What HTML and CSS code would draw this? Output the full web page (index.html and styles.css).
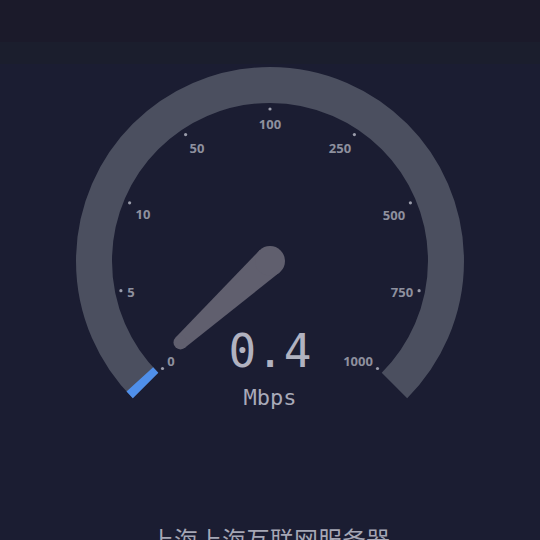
FILE: index.html
```html
<!DOCTYPE html>
<html lang="zh">
<head>
  <meta charset="UTF-8">
  <title>测速</title>
  <link rel="stylesheet" href="styles.css">
</head>
<body>
  <div class="topbar"></div>
  <div class="subbar"></div>

  <main class="main">
    <svg class="gauge" width="540" height="400" viewBox="0 64 540 400">
      <!-- track -->
      <path class="track" d="M145.55 385.45 A176 176 0 1 1 394.45 385.45"/>
      <!-- progress -->
      <path class="progress" d="M145.55 385.45 A176 176 0 0 1 139.83 379.45"/>

      <!-- ticks -->
      <g class="ticks">
        <circle cx="162.5" cy="368.5" r="1.6"/>
        <circle cx="120.9" cy="290.7" r="1.6"/>
        <circle cx="129.6" cy="202.8" r="1.6"/>
        <circle cx="185.6" cy="134.6" r="1.6"/>
        <circle cx="270" cy="109" r="1.6"/>
        <circle cx="354.4" cy="134.6" r="1.6"/>
        <circle cx="410.4" cy="202.8" r="1.6"/>
        <circle cx="419.1" cy="290.7" r="1.6"/>
        <circle cx="377.5" cy="368.5" r="1.6"/>
      </g>

      <g class="labels">
        <text x="171" y="361">0</text>
        <text x="131" y="292">5</text>
        <text x="143" y="214">10</text>
        <text x="197" y="148">50</text>
        <text x="270" y="124">100</text>
        <text x="340" y="148">250</text>
        <text x="394" y="215">500</text>
        <text x="402" y="292">750</text>
        <text x="358" y="361">1000</text>
      </g>

      <!-- needle -->
      <g class="needle">
        <polygon points="280.1,272.1 185.2,347.6 175.8,337.2 259.9,249.9"/>
        <circle cx="270" cy="261" r="15"/>
        <circle cx="180.5" cy="342.4" r="7"/>
      </g>

      <text class="speed" x="270" y="351">0.4</text>
      <text class="unit" x="270" y="397">Mbps</text>
    </svg>

    <p class="server">上海上海互联网服务器</p>
  </main>
</body>
</html>
```

FILE: styles.css
```css
html, body {
  margin: 0;
  padding: 0;
  background-color: #1b1d32;
  overflow: hidden;
}

body {
  font-family: "Noto Sans", "Noto Sans CJK SC", sans-serif;
  color: #a6a7b5;
}

.topbar {
  height: 42px;
  background-color: #1b1a2a;
}

.subbar {
  height: 22px;
  background-color: #1b1e2d;
}

.main {
  display: flex;
  flex-direction: column;
  align-items: center;
}

.gauge {
  display: block;
}

.track {
  fill: none;
  stroke: #4b4f5f;
  stroke-width: 36;
}

.progress {
  fill: none;
  stroke: #4f8fea;
  stroke-width: 36;
}

.ticks circle {
  fill: #9a9caa;
}

.labels text {
  fill: #8e909e;
  font-family: "Noto Sans", sans-serif;
  font-weight: 700;
  font-size: 13px;
  text-anchor: middle;
  dominant-baseline: central;
}

.needle {
  fill: #605f6e;
}

.speed {
  fill: #b1b2c0;
  font-family: "DejaVu Sans Mono", monospace;
  font-size: 46px;
  text-anchor: middle;
  dominant-baseline: central;
}

.unit {
  fill: #a9aab8;
  font-family: "DejaVu Sans Mono", monospace;
  font-size: 22px;
  text-anchor: middle;
  dominant-baseline: central;
}

.server {
  margin: 60px 0 0;
  font-family: "Noto Sans CJK SC", sans-serif;
  font-size: 24px;
  line-height: 29px;
  color: #a6a7b5;
}
```
